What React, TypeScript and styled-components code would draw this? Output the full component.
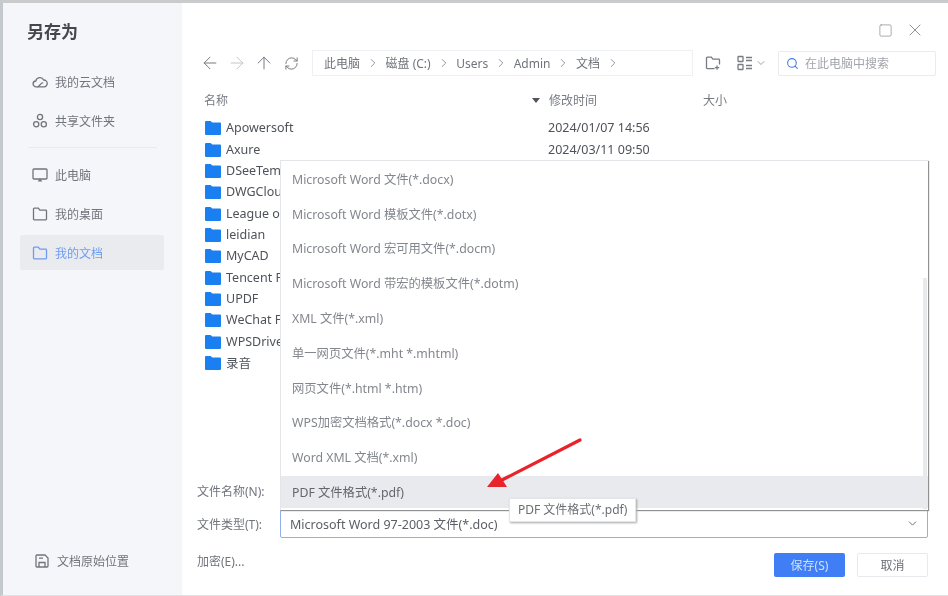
import styled, { createGlobalStyle } from 'styled-components';
import {
  ArrowLeft,
  ArrowRight,
  ArrowUp,
  ChevronDown,
  ChevronRight,
  RefreshCw,
  Search,
  Square,
  X,
} from 'lucide-react';

const GlobalStyle = createGlobalStyle`
  html, body {
    margin: 0;
    padding: 0;
    background: #fff;
  }
  body {
    font-family: "Noto Sans", "Noto Sans CJK SC", sans-serif;
    color: #555a63;
  }
`;

const Icon = styled.svg.attrs({
  width: 16,
  height: 16,
  viewBox: '0 0 16 16',
  fill: 'none',
  stroke: 'currentColor',
  strokeWidth: 1.3,
})`
  flex: none;
`;

const CloudIcon = () => (
  <Icon>
    <path d="M4.2 12.8a2.9 2.9 0 0 1-.4-5.8A4.2 4.2 0 0 1 11.7 6a3.4 3.4 0 1 1 .3 6.8z" />
    <path d="M5.4 12.8c2.6 0 2.6-4.2 5.8-4.2" />
  </Icon>
);

const ShareIcon = () => (
  <Icon>
    <circle cx="8" cy="4" r="2.6" />
    <circle cx="4.2" cy="11.2" r="2.6" />
    <circle cx="11.8" cy="11.2" r="2.6" />
  </Icon>
);

const MonitorIcon = () => (
  <Icon>
    <rect x="1" y="2" width="14" height="10" rx="1" />
    <path d="M5.6 14.6h4.8L8 11.4z" fill="currentColor" stroke="none" />
  </Icon>
);

const FolderIcon = () => (
  <Icon>
    <path d="M1.5 13V3a.8.8 0 0 1 .8-.8h4l1.6 2h5.8a.8.8 0 0 1 .8.8v8a.8.8 0 0 1-.8.8H2.3a.8.8 0 0 1-.8-.8z" />
  </Icon>
);

const SavePlaceIcon = () => (
  <Icon>
    <path d="M2 3a1 1 0 0 1 1-1h8l3 3v8a1 1 0 0 1-1 1H3a1 1 0 0 1-1-1z" />
    <path d="M5 14V9.5h6V14M5 5.2h4" />
  </Icon>
);

const NewFolderIcon = () => (
  <Icon>
    <path d="M9.5 13.6H2.3a.8.8 0 0 1-.8-.8V3a.8.8 0 0 1 .8-.8h4l1.6 2h5.8a.8.8 0 0 1 .8.8v4.6" />
    <path d="M12 10.4v4.4M9.8 12.6h4.4" />
  </Icon>
);

const ListViewIcon = () => (
  <Icon>
    <rect x="1" y="1.5" width="5" height="5" rx="0.6" />
    <rect x="1" y="9.5" width="5" height="5" rx="0.6" />
    <path d="M9 2.5h6M9 5.5h6M9 10.5h6M9 13.5h6" />
  </Icon>
);

const places = [
  { label: '此电脑', icon: <MonitorIcon /> },
  { label: '我的桌面', icon: <FolderIcon /> },
  { label: '我的文档', icon: <FolderIcon />, active: true },
];

const crumbs = ['此电脑', '磁盘 (C:)', 'Users', 'Admin', '文档'];

// names are as far as they show past the open menu
const files = [
  { name: 'Apowersoft', date: '2024/01/07 14:56' },
  { name: 'Axure', date: '2024/03/11 09:50' },
  { name: 'DSeeTem' },
  { name: 'DWGClou' },
  { name: 'League o' },
  { name: 'leidian' },
  { name: 'MyCAD' },
  { name: 'Tencent F' },
  { name: 'UPDF' },
  { name: 'WeChat F' },
  { name: 'WPSDrive' },
  { name: '录音' },
];

const formats = [
  'Microsoft Word 文件(*.docx)',
  'Microsoft Word 模板文件(*.dotx)',
  'Microsoft Word 宏可用文件(*.docm)',
  'Microsoft Word 带宏的模板文件(*.dotm)',
  'XML 文件(*.xml)',
  '单一网页文件(*.mht *.mhtml)',
  '网页文件(*.html *.htm)',
  'WPS加密文档格式(*.docx *.doc)',
  'Word XML 文档(*.xml)',
  'PDF 文件格式(*.pdf)',
];

const App = () => {
  return (
    <Frame>
      <GlobalStyle />
      <Sidebar>
        <DialogTitle>另存为</DialogTitle>
        <PlaceGroup>
          <Place>
            <CloudIcon />
            我的云文档
          </Place>
          <Place>
            <ShareIcon />
            共享文件夹
          </Place>
        </PlaceGroup>
        <Divider />
        <PlaceGroup>
          {places.map((place) => (
            <Place key={place.label} $active={place.active}>
              {place.icon}
              {place.label}
            </Place>
          ))}
        </PlaceGroup>
        <OriginalPlace>
          <SavePlaceIcon />
          文档原始位置
        </OriginalPlace>
      </Sidebar>

      <Main>
        <WindowBar>
          <Square size={15} strokeWidth={1.1} />
          <X size={20} strokeWidth={1.1} />
        </WindowBar>

        <Toolbar>
          <NavIcons>
            <ArrowLeft size={20} strokeWidth={1.2} />
            <DimIcon>
              <ArrowRight size={20} strokeWidth={1.2} />
            </DimIcon>
            <ArrowUp size={20} strokeWidth={1.2} />
            <RefreshIcon size={15} strokeWidth={1.6} />
          </NavIcons>
          <Breadcrumb>
            {crumbs.map((crumb) => (
              <Crumb key={crumb}>
                {crumb}
                <ChevronRight size={14} strokeWidth={1.3} />
              </Crumb>
            ))}
          </Breadcrumb>
          <ViewIcons>
            <NewFolderIcon />
            <ViewToggle>
              <ListViewIcon />
              <ChevronDown size={12} strokeWidth={1.4} />
            </ViewToggle>
          </ViewIcons>
          <SearchBox>
            <Search size={13} strokeWidth={2} color="#4a7fe0" />
            在此电脑中搜索
          </SearchBox>
        </Toolbar>

        <ColumnHeader>
          <NameColumn>
            名称
            <SortMark />
          </NameColumn>
          <DateColumn>修改时间</DateColumn>
          <span>大小</span>
        </ColumnHeader>

        <FileList>
          {files.map((file) => (
            <FileRow key={file.name}>
              <FileName>
                <svg width="16" height="15" viewBox="0 0 16 15">
                  <path d="M0 2a1 1 0 0 1 1-1h4.6l1.6 1.6H15a1 1 0 0 1 1 1V14a1 1 0 0 1-1 1H1a1 1 0 0 1-1-1z" fill="#1a7ff0" />
                </svg>
                {file.name}
              </FileName>
              <span>{file.date}</span>
            </FileRow>
          ))}
        </FileList>

        <FormRow>
          <FormLabel>文件名称(N):</FormLabel>
        </FormRow>
        <FormRow>
          <FormLabel>文件类型(T):</FormLabel>
          <TypeSelect>
            Microsoft Word 97-2003 文件(*.doc)
            <ChevronDown size={13} strokeWidth={1.6} />
          </TypeSelect>
        </FormRow>
        <Footer>
          <EncryptLink>加密(E)...</EncryptLink>
          <SaveButton>保存(S)</SaveButton>
          <CancelButton>取消</CancelButton>
        </Footer>

        <FormatMenu>
          {formats.map((format) => (
            <FormatItem key={format} $selected={format.startsWith('PDF')}>
              {format}
            </FormatItem>
          ))}
          <MenuScrollbar />
        </FormatMenu>
        <Tooltip>PDF 文件格式(*.pdf)</Tooltip>
        <RedArrow width="100" height="60" viewBox="0 0 100 60">
          <path d="M95 4 L15 45" stroke="#e8242a" strokeWidth="3.2" strokeLinecap="round" />
          <path d="M2 51 L13 37 L22 51 Z" fill="#e8242a" />
        </RedArrow>
      </Main>
    </Frame>
  );
};

const Frame = styled.div`
  display: flex;
  width: 948px;
  height: 596px;
  box-sizing: border-box;
  overflow: hidden;
  border-top: 3px solid #c9cbcd;
  border-left: 3px solid #c3c9cc;
  border-bottom: 1px solid #dfe0e2;
  background: #fff;
  filter: blur(0.35px);
`;

const Sidebar = styled.aside`
  display: flex;
  flex-direction: column;
  flex: 0 0 179px;
  box-sizing: border-box;
  padding: 18px 18px 0 17px;
  background: #f4f6fa;
`;

const DialogTitle = styled.h1`
  margin: 0 0 21px 7px;
  font-size: 17px;
  line-height: 22px;
  font-weight: 700;
  color: #44474d;
`;

const PlaceGroup = styled.div`
  display: flex;
  flex-direction: column;
  gap: 4px;
`;

const Place = styled.div<{ $active?: boolean }>`
  display: flex;
  align-items: center;
  gap: 7px;
  height: 35px;
  padding-left: 12px;
  font-size: 12px;
  color: ${(p) => (p.$active ? '#6f9cf0' : '#70747b')};
  background: ${(p) => (p.$active ? '#e9ebef' : 'transparent')};
  border-radius: 2px;
`;

const Divider = styled.div`
  height: 1px;
  margin: 9px 7px 9px 8px;
  background: #e8eaee;
`;

const OriginalPlace = styled.div`
  display: flex;
  align-items: center;
  gap: 7px;
  margin-top: auto;
  margin-bottom: 25px;
  padding-left: 14px;
  font-size: 12px;
  color: #70747b;
`;

const Main = styled.main`
  position: relative;
  display: flex;
  flex-direction: column;
  flex: 1;
  min-width: 0;
  padding: 0 12px 0 15px;
`;

const WindowBar = styled.div`
  display: flex;
  justify-content: flex-end;
  align-items: center;
  gap: 12px;
  height: 20px;
  margin-top: 17px;
  padding-right: 11px;
  color: #85888e;
`;

const Toolbar = styled.div`
  display: flex;
  align-items: center;
  height: 28px;
  margin-top: 9px;
`;

const NavIcons = styled.div`
  display: flex;
  align-items: center;
  gap: 7px;
  width: 115px;
  padding-left: 3px;
  box-sizing: border-box;
  color: #777b82;
`;

const DimIcon = styled.span`
  display: flex;
  color: #c3c5c9;
`;

const RefreshIcon = styled(RefreshCw)`
  margin-left: 3px;
`;

const Breadcrumb = styled.div`
  display: flex;
  align-items: center;
  gap: 5.5px;
  width: 381px;
  height: 26px;
  box-sizing: border-box;
  padding-left: 11px;
  border: 1px solid #eff0f3;
  font-size: 12px;
  color: #70747b;
`;

const Crumb = styled.span`
  display: flex;
  align-items: center;
  gap: 6px;
`;

const ViewIcons = styled.div`
  display: flex;
  align-items: center;
  gap: 16px;
  width: 85px;
  padding-left: 12px;
  box-sizing: border-box;
  color: #777b82;
`;

const ViewToggle = styled.span`
  display: flex;
  align-items: center;
  gap: 2px;
`;

const SearchBox = styled.div`
  display: flex;
  align-items: center;
  gap: 6px;
  width: 158px;
  height: 25px;
  box-sizing: border-box;
  padding-left: 7px;
  border: 1px solid #e9ebf0;
  border-radius: 2px;
  font-size: 12px;
  color: #a2a5ab;
`;

const ColumnHeader = styled.div`
  display: flex;
  align-items: center;
  height: 18px;
  margin-top: 14px;
  padding-left: 7px;
  font-size: 12px;
  color: #777b82;
`;

const NameColumn = styled.span`
  display: flex;
  align-items: center;
  justify-content: space-between;
  width: 336px;
`;

const SortMark = styled.i`
  width: 0;
  height: 0;
  border-left: 4px solid transparent;
  border-right: 4px solid transparent;
  border-top: 5px solid #50545a;
`;

const DateColumn = styled.span`
  width: 154px;
  margin-left: 9px;
`;

const FileList = styled.div`
  display: flex;
  flex-direction: column;
  margin-top: 8px;
  height: 357px;
`;

const FileRow = styled.div`
  display: flex;
  align-items: center;
  height: 21.36px;
  flex: none;
  padding-left: 8px;
  font-size: 12.5px;
  color: #4e5259;
`;

const FileName = styled.span`
  display: flex;
  align-items: center;
  gap: 5px;
  width: 343px;
  white-space: nowrap;
`;

const FormRow = styled.div`
  display: flex;
  align-items: center;
  height: 33px;
  margin-right: 8px;
`;

const FormLabel = styled.span`
  width: 83px;
  font-size: 12px;
  color: #70747b;
`;

const TypeSelect = styled.div`
  display: flex;
  align-items: center;
  justify-content: space-between;
  flex: 1;
  height: 29px;
  box-sizing: border-box;
  padding: 0 8px 0 9px;
  border: 1px solid #8fb0e6;
  border-radius: 2px;
  font-size: 12.5px;
  color: #5b5f66;
`;

const Footer = styled.div`
  display: flex;
  align-items: center;
  gap: 12px;
  height: 24px;
  margin: 13px 8px 0 0;
`;

const EncryptLink = styled.span`
  margin-right: auto;
  margin-bottom: 8px;
  font-size: 12px;
  color: #70747b;
`;

const BaseButton = styled.button`
  width: 71px;
  height: 24px;
  padding: 0;
  border-radius: 2px;
  font-family: inherit;
  font-size: 12px;
`;

const SaveButton = styled(BaseButton)`
  border: none;
  background: #3f7ef5;
  color: #cfe0fb;
`;

const CancelButton = styled(BaseButton)`
  border: 1px solid #e8e9ec;
  background: #fff;
  color: #6a6e75;
`;

const FormatMenu = styled.div`
  position: absolute;
  left: 98px;
  top: 157px;
  width: 648px;
  height: 350px;
  box-sizing: border-box;
  padding-top: 0.4px;
  background: #fff;
  border-top: 1px solid #e4e5e8;
  border-left: 1px solid #e4e5e8;
  box-shadow: 1px 1px 1px #8f9193;
`;

const FormatItem = styled.div<{ $selected?: boolean }>`
  display: flex;
  align-items: center;
  height: ${(p) => (p.$selected ? '32px' : '34.8px')};
  margin: ${(p) => (p.$selected ? '1.4px 0' : '0')};
  padding-left: 11px;
  font-size: 12.3px;
  color: ${(p) => (p.$selected ? '#62666d' : '#83878d')};
  background: ${(p) => (p.$selected ? '#e9eaed' : 'transparent')};
`;

const MenuScrollbar = styled.div`
  position: absolute;
  right: 1px;
  top: 117px;
  bottom: 1px;
  width: 4px;
  background: #e9eaec;
`;

const Tooltip = styled.div`
  position: absolute;
  left: 327px;
  top: 495px;
  padding: 2px 8px;
  font-size: 12px;
  line-height: 18px;
  color: #6a6e75;
  background: #fff;
  border: 1px solid #e4e5e8;
  box-shadow: 1px 1px 2px #a8a9ab;
  white-space: nowrap;
`;

const RedArrow = styled.svg`
  position: absolute;
  left: 303px;
  top: 433px;
`;

export default App;
